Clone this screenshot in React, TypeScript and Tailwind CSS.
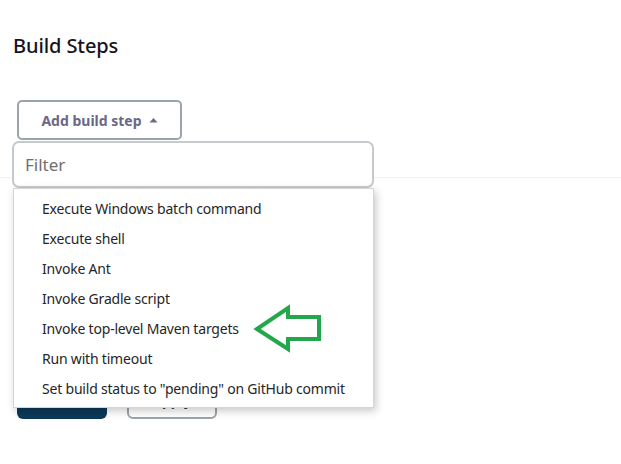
const items = [
  "Execute Windows batch command",
  "Execute shell",
  "Invoke Ant",
  "Invoke Gradle script",
  "Invoke top-level Maven targets",
  "Run with timeout",
  'Set build status to "pending" on GitHub commit',
];

export default function App() {
  return (
    <div
      className="relative w-[621px] h-[464px] bg-white overflow-hidden"
      style={{ fontFamily: '"Noto Sans", "Open Sans", sans-serif' }}
    >
      <h2 className="pt-[32px] pl-[13px] text-[20px] leading-[28px] font-medium tracking-[-0.1px] text-[#14141f]">
        Build Steps
      </h2>

      <div className="pl-[17px] mt-[40px]">
        <button className="h-[40px] w-[165px] rounded-[5px] border-2 border-[#9aa4ab] bg-white flex items-center justify-center gap-[7px] text-[14px] font-bold text-[#6a6884]">
          Add build step
          <svg width="9" height="6" viewBox="0 0 9 6">
            <path d="M0.5 5.5 L4.5 1 L8.5 5.5 Z" fill="#6a6884" />
          </svg>
        </button>
      </div>

      <div className="mt-[37px] border-b border-[#f0f0f0]" />

      <div className="flex gap-[20px] pl-[17px] mt-[203px]">
        <button className="h-[38px] w-[90px] rounded-[6px] bg-[#0b3a5a] text-white text-[14px] font-bold">
          Save
        </button>
        <button className="h-[38px] w-[90px] rounded-[6px] border-2 border-[#9aa4ab] bg-white text-[#333] text-[14px] font-bold">
          Apply
        </button>
      </div>

      {/* dropdown */}
      <div className="absolute left-[12px] top-[141px] w-[362px]">
        <div className="h-[47px] rounded-[7px] border-2 border-[#c5cace] bg-white flex items-center pl-[11px] text-[17px] text-[#707070]">
          Filter
        </div>
        <ul className="ml-[1px] w-[361px] h-[220px] bg-white border border-[#d4d4d4] shadow-[2px_3px_8px_rgba(0,0,0,0.22)] pt-[4px]">
          {items.map((t) => (
            <li
              key={t}
              className="h-[30px] flex items-center pl-[28px] text-[14px] tracking-[-0.2px] text-[#262626]"
            >
              {t}
            </li>
          ))}
        </ul>
      </div>

      {/* green annotation arrow */}
      <svg className="absolute left-[250px] top-[300px]" width="80" height="56" viewBox="0 0 80 56">
        <path
          d="M7 29 L38 8 L38 17 L69 17 L69 39 L38 39 L38 49 Z"
          fill="none"
          stroke="#22a84b"
          strokeWidth="4"
          strokeLinejoin="miter"
        />
      </svg>
    </div>
  );
}
